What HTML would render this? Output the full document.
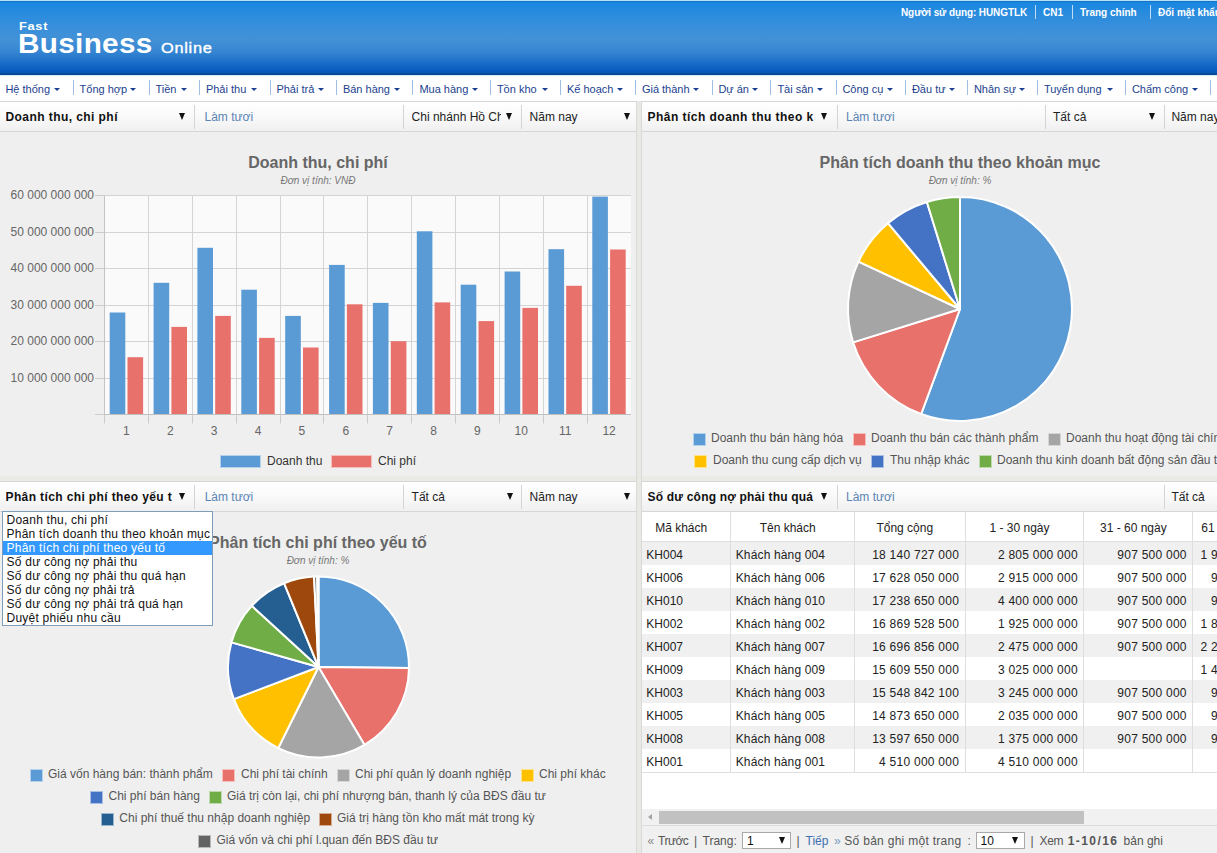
<!DOCTYPE html><html><head><meta charset="utf-8"><style>
*{margin:0;padding:0;box-sizing:border-box}
html,body{width:1217px;height:853px;overflow:hidden;background:#efefef;font-family:"Liberation Sans",sans-serif;font-size:12px;color:#000}
.a{position:absolute;white-space:nowrap}
#hdr{position:absolute;left:0;top:0;width:1217px;height:75px;
background:linear-gradient(to bottom,#b4e2fa 0px,#b4e2fa 1px,#1a70c4 1px,#1a70c4 2px,#1887e0 2px,#2a8cde 14px,#3d90d9 32px,#4291d6 40px,#3585d2 52px,#1c6fc8 62px,#0a5dc0 70px,#0856b4 73px,#0a4a94 73px,#0a4a94 75px)}
.logo{position:absolute;color:#fff;font-weight:bold;white-space:nowrap;line-height:1}
.usr{position:absolute;top:7px;color:#fff;font-weight:bold;font-size:10px;white-space:nowrap;line-height:12px}
.usep{position:absolute;top:5px;width:1px;height:14px;background:#c0dcf4}
#menu{position:absolute;left:0;top:75px;width:1217px;height:27px;background:linear-gradient(to bottom,#cdeafa 0,#cdeafa 1px,#fff 1px);border-bottom:1px solid #d6d6d6}
.mi{position:absolute;top:8px;color:#1b3f8f;font-size:11px;white-space:nowrap;line-height:13px}
.ma{position:absolute;top:13px;width:0;height:0;border-left:3px solid transparent;border-right:3px solid transparent;border-top:3px solid #1b3f8f}
.msep{position:absolute;top:5px;width:1px;height:15px;background:#9fc0e2}
.ph{position:absolute;height:30px;background:linear-gradient(to bottom,#ffffff 0,#fafafa 45%,#f0f0f0 100%);border-bottom:1px solid #d6d6d6;overflow:hidden}
.pt{position:absolute;top:8px;font-weight:bold;font-size:12px;white-space:nowrap;color:#111;line-height:14px}
.lt{position:absolute;top:8px;color:#5a84b4;font-size:12px;white-space:nowrap;line-height:14px}
.st{position:absolute;top:8px;color:#222;font-size:12px;white-space:nowrap;line-height:14px}
.arr{position:absolute;top:11px;width:0;height:0;border-left:3px solid transparent;border-right:3px solid transparent;border-top:7px solid #111}
.hsep{position:absolute;top:3px;width:1px;height:24px;background:#d4d4d4}
.ctitle{position:absolute;font-weight:bold;font-size:16px;color:#666;white-space:nowrap;line-height:18px;text-align:center}
.csub{position:absolute;font-style:italic;font-size:10px;color:#777;white-space:nowrap;line-height:12px;text-align:center}
.lg{position:absolute;font-size:12px;color:#555;white-space:nowrap;line-height:14px}
.lb{position:absolute;width:13px;height:13px;border:1px solid rgba(255,255,255,0.55);margin:-0.5px 0 0 -0.5px}
</style></head><body>
<div id="hdr">
<div class="logo" style="left:18.5px;top:20.5px;font-size:11.5px;letter-spacing:0.6px;transform:scaleX(1.12);transform-origin:0 0">Fast</div>
<div class="logo" style="left:17.5px;top:30px;font-size:27.5px;letter-spacing:0.3px;transform:scaleX(1.08);transform-origin:0 0">Business</div>
<div class="logo" style="left:160.5px;top:40.5px;font-size:14px;font-weight:normal;letter-spacing:0.6px;-webkit-text-stroke:0.35px #fff;transform:scaleX(1.17);transform-origin:0 0">Online</div>
<div class="usr" style="left:901px;letter-spacing:-0.1px">Người sử dụng: HUNGTLK</div>
<div class="usep" style="left:1035px"></div>
<div class="usr" style="left:1043px">CN1</div>
<div class="usep" style="left:1072px"></div>
<div class="usr" style="left:1080px">Trang chính</div>
<div class="usep" style="left:1150px"></div>
<div class="usr" style="left:1158px">Đổi mật khẩu</div>
</div>
<div id="menu">
<div class="mi" style="left:5.4px">Hệ thống</div>
<div class="ma" style="left:54.4px"></div>
<div class="mi" style="left:79.6px">Tổng hợp</div>
<div class="ma" style="left:130.3px"></div>
<div class="mi" style="left:155.5px">Tiền</div>
<div class="ma" style="left:180.7px"></div>
<div class="mi" style="left:205.9px">Phải thu</div>
<div class="ma" style="left:251.2px"></div>
<div class="mi" style="left:276.4px">Phải trả</div>
<div class="ma" style="left:317.7px"></div>
<div class="mi" style="left:342.9px">Bán hàng</div>
<div class="ma" style="left:394.2px"></div>
<div class="mi" style="left:419.4px">Mua hàng</div>
<div class="ma" style="left:471.7px"></div>
<div class="mi" style="left:496.9px">Tồn kho</div>
<div class="ma" style="left:541.7px"></div>
<div class="mi" style="left:566.9px">Kế hoạch</div>
<div class="ma" style="left:616.7px"></div>
<div class="mi" style="left:641.9px">Giá thành</div>
<div class="ma" style="left:693.2px"></div>
<div class="mi" style="left:718.4px">Dự án</div>
<div class="ma" style="left:752.2px"></div>
<div class="mi" style="left:777.4px">Tài sản</div>
<div class="ma" style="left:817.2px"></div>
<div class="mi" style="left:842.4px">Công cụ</div>
<div class="ma" style="left:886.7px"></div>
<div class="mi" style="left:911.9px">Đầu tư</div>
<div class="ma" style="left:948.7px"></div>
<div class="mi" style="left:973.9px">Nhân sự</div>
<div class="ma" style="left:1018.7px"></div>
<div class="mi" style="left:1043.9px">Tuyển dụng</div>
<div class="ma" style="left:1106.7px"></div>
<div class="mi" style="left:1131.9px">Chấm công</div>
<div class="ma" style="left:1191.7px"></div>
<div class="msep" style="left:73px"></div>
<div class="msep" style="left:149px"></div>
<div class="msep" style="left:199px"></div>
<div class="msep" style="left:270px"></div>
<div class="msep" style="left:336px"></div>
<div class="msep" style="left:412px"></div>
<div class="msep" style="left:490px"></div>
<div class="msep" style="left:560px"></div>
<div class="msep" style="left:635px"></div>
<div class="msep" style="left:712px"></div>
<div class="msep" style="left:770px"></div>
<div class="msep" style="left:836px"></div>
<div class="msep" style="left:905px"></div>
<div class="msep" style="left:967px"></div>
<div class="msep" style="left:1037px"></div>
<div class="msep" style="left:1125px"></div>
<div class="msep" style="left:1210px"></div>
</div>
<div class="a" style="left:0;top:476px;width:636px;height:5px;background:#ebebe5"></div>
<div class="a" style="left:641px;top:476px;width:576px;height:5px;background:#ebebe5"></div>
<div class="ph" style="left:0px;top:102px;width:636px;">
<div class="pt" style="left:5.5px;width:170px;overflow:hidden;letter-spacing:0.43px">Doanh thu, chi phí</div>
<div class="arr" style="left:178.7px"></div>
<div class="hsep" style="left:194px"></div>
<div class="lt" style="left:204.5px">Làm tươi</div>
<div class="hsep" style="left:403px"></div>
<div class="st" style="left:411.6px;width:89px;overflow:hidden">Chi nhánh Hồ Chí Minh</div>
<div class="arr" style="left:506px"></div>
<div class="hsep" style="left:521px"></div>
<div class="st" style="left:529.6px">Năm nay</div>
<div class="arr" style="left:624px"></div>
</div>
<div class="ph" style="left:641px;top:102px;width:576px;">
<div class="pt" style="left:6.5px;width:168px;overflow:hidden;letter-spacing:0.47px">Phân tích doanh thu theo k</div>
<div class="arr" style="left:180px"></div>
<div class="hsep" style="left:196px"></div>
<div class="lt" style="left:205px">Làm tươi</div>
<div class="hsep" style="left:404px"></div>
<div class="st" style="left:412px">Tất cả</div>
<div class="arr" style="left:507.7px"></div>
<div class="hsep" style="left:522.5px"></div>
<div class="st" style="left:530.4px">Năm nay</div>
</div>
<div class="ph" style="left:0px;top:481px;width:636px;height:31px;border-top:1px solid #d6d6d6;">
<div class="pt" style="left:5.5px;width:168px;overflow:hidden;letter-spacing:0.38px">Phân tích chi phí theo yếu t</div>
<div class="arr" style="left:178.7px"></div>
<div class="hsep" style="left:194px"></div>
<div class="lt" style="left:204.7px">Làm tươi</div>
<div class="hsep" style="left:403px"></div>
<div class="st" style="left:411.6px">Tất cả</div>
<div class="arr" style="left:506.5px"></div>
<div class="hsep" style="left:521px"></div>
<div class="st" style="left:529.6px">Năm nay</div>
<div class="arr" style="left:624px"></div>
</div>
<div class="ph" style="left:641px;top:481px;width:576px;height:31px;border-top:1px solid #d6d6d6;">
<div class="pt" style="left:6.5px;width:168px;overflow:hidden;letter-spacing:0.2px">Số dư công nợ phải thu quá</div>
<div class="arr" style="left:180px"></div>
<div class="hsep" style="left:196px"></div>
<div class="lt" style="left:205px">Làm tươi</div>
<div class="hsep" style="left:522.5px"></div>
<div class="st" style="left:530.4px">Tất cả</div>
</div>
<svg class="a" style="left:0;top:0" width="1217" height="853">
<rect x="104.5" y="195.5" width="526.5" height="219.0" fill="#fafafa"/>
<line x1="104.5" y1="195.5" x2="631.0" y2="195.5" stroke="#d4d4d4" stroke-width="1"/>
<line x1="104.5" y1="232.5" x2="631.0" y2="232.5" stroke="#d4d4d4" stroke-width="1"/>
<line x1="104.5" y1="268.5" x2="631.0" y2="268.5" stroke="#d4d4d4" stroke-width="1"/>
<line x1="104.5" y1="305.5" x2="631.0" y2="305.5" stroke="#d4d4d4" stroke-width="1"/>
<line x1="104.5" y1="341.5" x2="631.0" y2="341.5" stroke="#d4d4d4" stroke-width="1"/>
<line x1="104.5" y1="378.5" x2="631.0" y2="378.5" stroke="#d4d4d4" stroke-width="1"/>
<line x1="104.5" y1="414.5" x2="631.0" y2="414.5" stroke="#d4d4d4" stroke-width="1"/>
<line x1="104.5" y1="195.5" x2="104.5" y2="414.5" stroke="#d4d4d4" stroke-width="1"/>
<line x1="148.5" y1="195.5" x2="148.5" y2="414.5" stroke="#d4d4d4" stroke-width="1"/>
<line x1="192.5" y1="195.5" x2="192.5" y2="414.5" stroke="#d4d4d4" stroke-width="1"/>
<line x1="236.5" y1="195.5" x2="236.5" y2="414.5" stroke="#d4d4d4" stroke-width="1"/>
<line x1="280.5" y1="195.5" x2="280.5" y2="414.5" stroke="#d4d4d4" stroke-width="1"/>
<line x1="323.5" y1="195.5" x2="323.5" y2="414.5" stroke="#d4d4d4" stroke-width="1"/>
<line x1="367.5" y1="195.5" x2="367.5" y2="414.5" stroke="#d4d4d4" stroke-width="1"/>
<line x1="411.5" y1="195.5" x2="411.5" y2="414.5" stroke="#d4d4d4" stroke-width="1"/>
<line x1="455.5" y1="195.5" x2="455.5" y2="414.5" stroke="#d4d4d4" stroke-width="1"/>
<line x1="499.5" y1="195.5" x2="499.5" y2="414.5" stroke="#d4d4d4" stroke-width="1"/>
<line x1="543.5" y1="195.5" x2="543.5" y2="414.5" stroke="#d4d4d4" stroke-width="1"/>
<line x1="587.5" y1="195.5" x2="587.5" y2="414.5" stroke="#d4d4d4" stroke-width="1"/>
<rect x="109.7" y="312.5" width="15.6" height="102.0" fill="#5b9bd5"/>
<rect x="127.5" y="357.2" width="15.6" height="57.3" fill="#e8716b"/>
<rect x="153.6" y="282.8" width="15.6" height="131.7" fill="#5b9bd5"/>
<rect x="171.4" y="326.9" width="15.6" height="87.6" fill="#e8716b"/>
<rect x="197.4" y="247.8" width="15.6" height="166.7" fill="#5b9bd5"/>
<rect x="215.2" y="315.9" width="15.6" height="98.6" fill="#e8716b"/>
<rect x="241.3" y="289.7" width="15.6" height="124.8" fill="#5b9bd5"/>
<rect x="259.1" y="337.9" width="15.6" height="76.6" fill="#e8716b"/>
<rect x="285.2" y="315.9" width="15.6" height="98.6" fill="#5b9bd5"/>
<rect x="303.0" y="347.5" width="15.6" height="67.0" fill="#e8716b"/>
<rect x="329.1" y="264.9" width="15.6" height="149.6" fill="#5b9bd5"/>
<rect x="346.9" y="304.3" width="15.6" height="110.2" fill="#e8716b"/>
<rect x="372.9" y="302.9" width="15.6" height="111.6" fill="#5b9bd5"/>
<rect x="390.8" y="341.2" width="15.6" height="73.3" fill="#e8716b"/>
<rect x="416.8" y="231.3" width="15.6" height="183.2" fill="#5b9bd5"/>
<rect x="434.6" y="302.4" width="15.6" height="112.1" fill="#e8716b"/>
<rect x="460.7" y="284.7" width="15.6" height="129.8" fill="#5b9bd5"/>
<rect x="478.5" y="321.1" width="15.6" height="93.4" fill="#e8716b"/>
<rect x="504.6" y="271.5" width="15.6" height="143.0" fill="#5b9bd5"/>
<rect x="522.4" y="307.9" width="15.6" height="106.6" fill="#e8716b"/>
<rect x="548.5" y="249.2" width="15.6" height="165.3" fill="#5b9bd5"/>
<rect x="566.2" y="285.8" width="15.6" height="128.7" fill="#e8716b"/>
<rect x="592.3" y="196.6" width="15.6" height="217.9" fill="#5b9bd5"/>
<rect x="610.1" y="249.5" width="15.6" height="165.0" fill="#e8716b"/>
<line x1="95" y1="414.5" x2="631.0" y2="414.5" stroke="#bfbfbf" stroke-width="1"/>
<line x1="95" y1="195.5" x2="104.5" y2="195.5" stroke="#cccccc" stroke-width="1"/>
<line x1="95" y1="232.5" x2="104.5" y2="232.5" stroke="#cccccc" stroke-width="1"/>
<line x1="95" y1="268.5" x2="104.5" y2="268.5" stroke="#cccccc" stroke-width="1"/>
<line x1="95" y1="305.5" x2="104.5" y2="305.5" stroke="#cccccc" stroke-width="1"/>
<line x1="95" y1="341.5" x2="104.5" y2="341.5" stroke="#cccccc" stroke-width="1"/>
<line x1="95" y1="378.5" x2="104.5" y2="378.5" stroke="#cccccc" stroke-width="1"/>
<line x1="95" y1="414.5" x2="104.5" y2="414.5" stroke="#cccccc" stroke-width="1"/>
<line x1="104.5" y1="195.5" x2="104.5" y2="414.5" stroke="#c4c4c4" stroke-width="1"/>
<line x1="104.5" y1="414.5" x2="104.5" y2="423.5" stroke="#cccccc" stroke-width="1"/>
<line x1="148.5" y1="414.5" x2="148.5" y2="423.5" stroke="#cccccc" stroke-width="1"/>
<line x1="192.5" y1="414.5" x2="192.5" y2="423.5" stroke="#cccccc" stroke-width="1"/>
<line x1="236.5" y1="414.5" x2="236.5" y2="423.5" stroke="#cccccc" stroke-width="1"/>
<line x1="280.5" y1="414.5" x2="280.5" y2="423.5" stroke="#cccccc" stroke-width="1"/>
<line x1="323.5" y1="414.5" x2="323.5" y2="423.5" stroke="#cccccc" stroke-width="1"/>
<line x1="367.5" y1="414.5" x2="367.5" y2="423.5" stroke="#cccccc" stroke-width="1"/>
<line x1="411.5" y1="414.5" x2="411.5" y2="423.5" stroke="#cccccc" stroke-width="1"/>
<line x1="455.5" y1="414.5" x2="455.5" y2="423.5" stroke="#cccccc" stroke-width="1"/>
<line x1="499.5" y1="414.5" x2="499.5" y2="423.5" stroke="#cccccc" stroke-width="1"/>
<line x1="543.5" y1="414.5" x2="543.5" y2="423.5" stroke="#cccccc" stroke-width="1"/>
<line x1="587.5" y1="414.5" x2="587.5" y2="423.5" stroke="#cccccc" stroke-width="1"/>
<text x="94" y="199.1" text-anchor="end" font-family="Liberation Sans" font-size="12" fill="#666">60 000 000 000</text>
<text x="94" y="235.6" text-anchor="end" font-family="Liberation Sans" font-size="12" fill="#666">50 000 000 000</text>
<text x="94" y="272.1" text-anchor="end" font-family="Liberation Sans" font-size="12" fill="#666">40 000 000 000</text>
<text x="94" y="308.6" text-anchor="end" font-family="Liberation Sans" font-size="12" fill="#666">30 000 000 000</text>
<text x="94" y="345.1" text-anchor="end" font-family="Liberation Sans" font-size="12" fill="#666">20 000 000 000</text>
<text x="94" y="381.6" text-anchor="end" font-family="Liberation Sans" font-size="12" fill="#666">10 000 000 000</text>
<text x="126.4" y="435" text-anchor="middle" font-family="Liberation Sans" font-size="12" fill="#666">1</text>
<text x="170.3" y="435" text-anchor="middle" font-family="Liberation Sans" font-size="12" fill="#666">2</text>
<text x="214.2" y="435" text-anchor="middle" font-family="Liberation Sans" font-size="12" fill="#666">3</text>
<text x="258.1" y="435" text-anchor="middle" font-family="Liberation Sans" font-size="12" fill="#666">4</text>
<text x="301.9" y="435" text-anchor="middle" font-family="Liberation Sans" font-size="12" fill="#666">5</text>
<text x="345.8" y="435" text-anchor="middle" font-family="Liberation Sans" font-size="12" fill="#666">6</text>
<text x="389.7" y="435" text-anchor="middle" font-family="Liberation Sans" font-size="12" fill="#666">7</text>
<text x="433.6" y="435" text-anchor="middle" font-family="Liberation Sans" font-size="12" fill="#666">8</text>
<text x="477.4" y="435" text-anchor="middle" font-family="Liberation Sans" font-size="12" fill="#666">9</text>
<text x="521.3" y="435" text-anchor="middle" font-family="Liberation Sans" font-size="12" fill="#666">10</text>
<text x="565.2" y="435" text-anchor="middle" font-family="Liberation Sans" font-size="12" fill="#666">11</text>
<text x="609.1" y="435" text-anchor="middle" font-family="Liberation Sans" font-size="12" fill="#666">12</text>
</svg>
<div class="ctitle" style="left:218px;top:154px;width:200px">Doanh thu, chi phí</div>
<div class="csub" style="left:218px;top:175px;width:200px">Đơn vị tính: VNĐ</div>
<div class="lb" style="left:220.5px;top:455px;width:41px;height:13px;background:#5b9bd5"></div>
<div class="lg" style="left:267px;top:454px;color:#333">Doanh thu</div>
<div class="lb" style="left:331.5px;top:455px;width:41px;height:13px;background:#e8716b"></div>
<div class="lg" style="left:378px;top:454px;color:#333">Chi phí</div>
<svg class="a" style="left:0;top:0" width="1217" height="853">
<path d="M960,309 L960.00,197.00 A112,112 0 1 1 921.14,414.04 Z" fill="#5b9bd5" stroke="#fff" stroke-width="2" stroke-linejoin="round"/>
<path d="M960,309 L921.14,414.04 A112,112 0 0 1 853.10,342.40 Z" fill="#e8716b" stroke="#fff" stroke-width="2" stroke-linejoin="round"/>
<path d="M960,309 L853.10,342.40 A112,112 0 0 1 858.49,261.67 Z" fill="#a5a5a5" stroke="#fff" stroke-width="2" stroke-linejoin="round"/>
<path d="M960,309 L858.49,261.67 A112,112 0 0 1 888.01,223.20 Z" fill="#ffc000" stroke="#fff" stroke-width="2" stroke-linejoin="round"/>
<path d="M960,309 L888.01,223.20 A112,112 0 0 1 926.88,202.01 Z" fill="#4472c4" stroke="#fff" stroke-width="2" stroke-linejoin="round"/>
<path d="M960,309 L926.88,202.01 A112,112 0 0 1 960.00,197.00 Z" fill="#70ad47" stroke="#fff" stroke-width="2" stroke-linejoin="round"/>
</svg>
<div class="ctitle" style="left:760px;top:154px;width:400px">Phân tích doanh thu theo khoản mục</div>
<div class="csub" style="left:760px;top:175px;width:400px">Đơn vị tính: %</div>
<div class="lb" style="left:693px;top:433px;background:#5b9bd5"></div>
<div class="lg" style="left:711px;top:431.2px">Doanh thu bán hàng hóa</div>
<div class="lb" style="left:853px;top:433px;background:#e8716b"></div>
<div class="lg" style="left:871px;top:431.2px">Doanh thu bán các thành phẩm</div>
<div class="lb" style="left:1048px;top:433px;background:#a5a5a5"></div>
<div class="lg" style="left:1066px;top:431.2px">Doanh thu hoạt động tài chính</div>
<div class="lb" style="left:694.5px;top:455px;background:#ffc000"></div>
<div class="lg" style="left:713px;top:453.2px">Doanh thu cung cấp dịch vụ</div>
<div class="lb" style="left:871.5px;top:455px;background:#4472c4"></div>
<div class="lg" style="left:890px;top:453.2px">Thu nhập khác</div>
<div class="lb" style="left:979px;top:455px;background:#70ad47"></div>
<div class="lg" style="left:997px;top:453.2px">Doanh thu kinh doanh bất động sản đầu tư</div>
<svg class="a" style="left:0;top:0" width="1217" height="853">
<path d="M318.5,667 L318.50,576.50 A90.5,90.5 0 0 1 408.99,668.11 Z" fill="#5b9bd5" stroke="#fff" stroke-width="2" stroke-linejoin="round"/>
<path d="M318.5,667 L408.99,668.11 A90.5,90.5 0 0 1 364.57,744.90 Z" fill="#e8716b" stroke="#fff" stroke-width="2" stroke-linejoin="round"/>
<path d="M318.5,667 L364.57,744.90 A90.5,90.5 0 0 1 278.26,748.06 Z" fill="#a5a5a5" stroke="#fff" stroke-width="2" stroke-linejoin="round"/>
<path d="M318.5,667 L278.26,748.06 A90.5,90.5 0 0 1 233.90,699.14 Z" fill="#ffc000" stroke="#fff" stroke-width="2" stroke-linejoin="round"/>
<path d="M318.5,667 L233.90,699.14 A90.5,90.5 0 0 1 231.42,642.36 Z" fill="#4472c4" stroke="#fff" stroke-width="2" stroke-linejoin="round"/>
<path d="M318.5,667 L231.42,642.36 A90.5,90.5 0 0 1 251.78,605.86 Z" fill="#70ad47" stroke="#fff" stroke-width="2" stroke-linejoin="round"/>
<path d="M318.5,667 L251.78,605.86 A90.5,90.5 0 0 1 284.16,583.27 Z" fill="#255e91" stroke="#fff" stroke-width="2" stroke-linejoin="round"/>
<path d="M318.5,667 L284.16,583.27 A90.5,90.5 0 0 1 314.08,576.61 Z" fill="#9e480e" stroke="#fff" stroke-width="2" stroke-linejoin="round"/>
<path d="M318.5,667 L314.08,576.61 A90.5,90.5 0 0 1 317.24,576.51 Z" fill="#636363" stroke="#fff" stroke-width="2" stroke-linejoin="round"/>
<path d="M318.5,667 L317.24,576.51 A90.5,90.5 0 0 1 318.50,576.50 Z" fill="#997300" stroke="#fff" stroke-width="2" stroke-linejoin="round"/>
</svg>
<div class="ctitle" style="left:118px;top:534px;width:400px">Phân tích chi phí theo yếu tố</div>
<div class="csub" style="left:118px;top:555px;width:400px">Đơn vị tính: %</div>
<div class="lb" style="left:30px;top:769px;background:#5b9bd5"></div>
<div class="lg" style="left:48px;top:767.2px">Giá vốn hàng bán: thành phẩm</div>
<div class="lb" style="left:222.5px;top:769px;background:#e8716b"></div>
<div class="lg" style="left:241px;top:767.2px">Chi phí tài chính</div>
<div class="lb" style="left:337px;top:769px;background:#a5a5a5"></div>
<div class="lg" style="left:355px;top:767.2px">Chi phí quản lý doanh nghiệp</div>
<div class="lb" style="left:521px;top:769px;background:#ffc000"></div>
<div class="lg" style="left:539px;top:767.2px">Chi phí khác</div>
<div class="lb" style="left:90px;top:791px;background:#4472c4"></div>
<div class="lg" style="left:108.5px;top:789.2px">Chi phí bán hàng</div>
<div class="lb" style="left:209px;top:791px;background:#70ad47"></div>
<div class="lg" style="left:227px;top:789.2px">Giá trị còn lại, chi phí nhượng bán, thanh lý của BĐS đầu tư</div>
<div class="lb" style="left:101px;top:813px;background:#255e91"></div>
<div class="lg" style="left:119.3px;top:811.2px">Chi phí thuế thu nhập doanh nghiệp</div>
<div class="lb" style="left:319px;top:813px;background:#9e480e"></div>
<div class="lg" style="left:337px;top:811.2px">Giá trị hàng tồn kho mất mát trong kỳ</div>
<div class="lb" style="left:198px;top:835px;background:#636363"></div>
<div class="lg" style="left:216.5px;top:833.2px">Giá vốn và chi phí l.quan đến BĐS đầu tư</div>
<div class="a" style="left:641px;top:512px;width:576px;height:297px;background:#fff;overflow:hidden">
<div class="a" style="left:0;top:0;width:700px;height:30px;background:#fff;border-bottom:1px solid #dedede"></div>
<div class="a" style="left:0;top:30px;width:700px;height:23px;background:#f0f0f0"></div>
<div class="a" style="left:0;top:53px;width:700px;height:23px;background:#fff"></div>
<div class="a" style="left:0;top:76px;width:700px;height:23px;background:#f0f0f0"></div>
<div class="a" style="left:0;top:99px;width:700px;height:23px;background:#fff"></div>
<div class="a" style="left:0;top:122px;width:700px;height:23px;background:#f0f0f0"></div>
<div class="a" style="left:0;top:145px;width:700px;height:23px;background:#fff"></div>
<div class="a" style="left:0;top:168px;width:700px;height:23px;background:#f0f0f0"></div>
<div class="a" style="left:0;top:191px;width:700px;height:23px;background:#fff"></div>
<div class="a" style="left:0;top:214px;width:700px;height:23px;background:#f0f0f0"></div>
<div class="a" style="left:0;top:237px;width:700px;height:23px;background:#fff"></div>
<div class="a" style="left:0;top:260px;width:700px;height:1px;background:#dedede"></div>
<div class="a" style="left:89.4px;top:0;width:1px;height:261px;background:#dedede"></div>
<div class="a" style="left:213.0px;top:0;width:1px;height:261px;background:#dedede"></div>
<div class="a" style="left:323.6px;top:0;width:1px;height:261px;background:#dedede"></div>
<div class="a" style="left:442.4px;top:0;width:1px;height:261px;background:#dedede"></div>
<div class="a" style="left:551.3px;top:0;width:1px;height:261px;background:#dedede"></div>
<div class="a" style="left:645.0px;top:0;width:1px;height:261px;background:#dedede"></div>
<div class="a" style="left:0.0px;top:8.5px;width:80.4px;text-align:center;color:#222;line-height:14px">Mã khách</div>
<div class="a" style="left:89.4px;top:8.5px;width:114.6px;text-align:center;color:#222;line-height:14px">Tên khách</div>
<div class="a" style="left:213.0px;top:8.5px;width:101.6px;text-align:center;color:#222;line-height:14px">Tổng cộng</div>
<div class="a" style="left:323.6px;top:8.5px;width:109.8px;text-align:center;color:#222;line-height:14px">1 - 30 ngày</div>
<div class="a" style="left:442.4px;top:8.5px;width:99.9px;text-align:center;color:#222;line-height:14px">31 - 60 ngày</div>
<div class="a" style="left:551.3px;top:8.5px;width:84.7px;text-align:center;color:#222;line-height:14px">61 - 90 ngày</div>
<div class="a" style="left:5.3px;top:35.5px;color:#222;line-height:14px;letter-spacing:0px">KH004</div>
<div class="a" style="left:94.7px;top:35.5px;color:#222;line-height:14px;letter-spacing:0.15px">Khách hàng 004</div>
<div class="a" style="left:213.0px;top:35.5px;width:105.1px;text-align:right;color:#222;line-height:14px;letter-spacing:0.25px">18 140 727 000</div>
<div class="a" style="left:323.6px;top:35.5px;width:113.3px;text-align:right;color:#222;line-height:14px;letter-spacing:0.25px">2 805 000 000</div>
<div class="a" style="left:442.4px;top:35.5px;width:103.4px;text-align:right;color:#222;line-height:14px;letter-spacing:0.25px">907 500 000</div>
<div class="a" style="left:551.3px;top:35.5px;width:88.2px;text-align:right;color:#222;line-height:14px;letter-spacing:0.25px">1 907 500 000</div>
<div class="a" style="left:5.3px;top:58.5px;color:#222;line-height:14px;letter-spacing:0px">KH006</div>
<div class="a" style="left:94.7px;top:58.5px;color:#222;line-height:14px;letter-spacing:0.15px">Khách hàng 006</div>
<div class="a" style="left:213.0px;top:58.5px;width:105.1px;text-align:right;color:#222;line-height:14px;letter-spacing:0.25px">17 628 050 000</div>
<div class="a" style="left:323.6px;top:58.5px;width:113.3px;text-align:right;color:#222;line-height:14px;letter-spacing:0.25px">2 915 000 000</div>
<div class="a" style="left:442.4px;top:58.5px;width:103.4px;text-align:right;color:#222;line-height:14px;letter-spacing:0.25px">907 500 000</div>
<div class="a" style="left:551.3px;top:58.5px;width:88.2px;text-align:right;color:#222;line-height:14px;letter-spacing:0.25px">907 500 000</div>
<div class="a" style="left:5.3px;top:81.5px;color:#222;line-height:14px;letter-spacing:0px">KH010</div>
<div class="a" style="left:94.7px;top:81.5px;color:#222;line-height:14px;letter-spacing:0.15px">Khách hàng 010</div>
<div class="a" style="left:213.0px;top:81.5px;width:105.1px;text-align:right;color:#222;line-height:14px;letter-spacing:0.25px">17 238 650 000</div>
<div class="a" style="left:323.6px;top:81.5px;width:113.3px;text-align:right;color:#222;line-height:14px;letter-spacing:0.25px">4 400 000 000</div>
<div class="a" style="left:442.4px;top:81.5px;width:103.4px;text-align:right;color:#222;line-height:14px;letter-spacing:0.25px">907 500 000</div>
<div class="a" style="left:551.3px;top:81.5px;width:88.2px;text-align:right;color:#222;line-height:14px;letter-spacing:0.25px">907 500 000</div>
<div class="a" style="left:5.3px;top:104.5px;color:#222;line-height:14px;letter-spacing:0px">KH002</div>
<div class="a" style="left:94.7px;top:104.5px;color:#222;line-height:14px;letter-spacing:0.15px">Khách hàng 002</div>
<div class="a" style="left:213.0px;top:104.5px;width:105.1px;text-align:right;color:#222;line-height:14px;letter-spacing:0.25px">16 869 528 500</div>
<div class="a" style="left:323.6px;top:104.5px;width:113.3px;text-align:right;color:#222;line-height:14px;letter-spacing:0.25px">1 925 000 000</div>
<div class="a" style="left:442.4px;top:104.5px;width:103.4px;text-align:right;color:#222;line-height:14px;letter-spacing:0.25px">907 500 000</div>
<div class="a" style="left:551.3px;top:104.5px;width:88.2px;text-align:right;color:#222;line-height:14px;letter-spacing:0.25px">1 815 000 000</div>
<div class="a" style="left:5.3px;top:127.5px;color:#222;line-height:14px;letter-spacing:0px">KH007</div>
<div class="a" style="left:94.7px;top:127.5px;color:#222;line-height:14px;letter-spacing:0.15px">Khách hàng 007</div>
<div class="a" style="left:213.0px;top:127.5px;width:105.1px;text-align:right;color:#222;line-height:14px;letter-spacing:0.25px">16 696 856 000</div>
<div class="a" style="left:323.6px;top:127.5px;width:113.3px;text-align:right;color:#222;line-height:14px;letter-spacing:0.25px">2 475 000 000</div>
<div class="a" style="left:442.4px;top:127.5px;width:103.4px;text-align:right;color:#222;line-height:14px;letter-spacing:0.25px">907 500 000</div>
<div class="a" style="left:551.3px;top:127.5px;width:88.2px;text-align:right;color:#222;line-height:14px;letter-spacing:0.25px">2 245 000 000</div>
<div class="a" style="left:5.3px;top:150.5px;color:#222;line-height:14px;letter-spacing:0px">KH009</div>
<div class="a" style="left:94.7px;top:150.5px;color:#222;line-height:14px;letter-spacing:0.15px">Khách hàng 009</div>
<div class="a" style="left:213.0px;top:150.5px;width:105.1px;text-align:right;color:#222;line-height:14px;letter-spacing:0.25px">15 609 550 000</div>
<div class="a" style="left:323.6px;top:150.5px;width:113.3px;text-align:right;color:#222;line-height:14px;letter-spacing:0.25px">3 025 000 000</div>
<div class="a" style="left:551.3px;top:150.5px;width:88.2px;text-align:right;color:#222;line-height:14px;letter-spacing:0.25px">1 452 000 000</div>
<div class="a" style="left:5.3px;top:173.5px;color:#222;line-height:14px;letter-spacing:0px">KH003</div>
<div class="a" style="left:94.7px;top:173.5px;color:#222;line-height:14px;letter-spacing:0.15px">Khách hàng 003</div>
<div class="a" style="left:213.0px;top:173.5px;width:105.1px;text-align:right;color:#222;line-height:14px;letter-spacing:0.25px">15 548 842 100</div>
<div class="a" style="left:323.6px;top:173.5px;width:113.3px;text-align:right;color:#222;line-height:14px;letter-spacing:0.25px">3 245 000 000</div>
<div class="a" style="left:442.4px;top:173.5px;width:103.4px;text-align:right;color:#222;line-height:14px;letter-spacing:0.25px">907 500 000</div>
<div class="a" style="left:551.3px;top:173.5px;width:88.2px;text-align:right;color:#222;line-height:14px;letter-spacing:0.25px">907 500 000</div>
<div class="a" style="left:5.3px;top:196.5px;color:#222;line-height:14px;letter-spacing:0px">KH005</div>
<div class="a" style="left:94.7px;top:196.5px;color:#222;line-height:14px;letter-spacing:0.15px">Khách hàng 005</div>
<div class="a" style="left:213.0px;top:196.5px;width:105.1px;text-align:right;color:#222;line-height:14px;letter-spacing:0.25px">14 873 650 000</div>
<div class="a" style="left:323.6px;top:196.5px;width:113.3px;text-align:right;color:#222;line-height:14px;letter-spacing:0.25px">2 035 000 000</div>
<div class="a" style="left:442.4px;top:196.5px;width:103.4px;text-align:right;color:#222;line-height:14px;letter-spacing:0.25px">907 500 000</div>
<div class="a" style="left:551.3px;top:196.5px;width:88.2px;text-align:right;color:#222;line-height:14px;letter-spacing:0.25px">907 500 000</div>
<div class="a" style="left:5.3px;top:219.5px;color:#222;line-height:14px;letter-spacing:0px">KH008</div>
<div class="a" style="left:94.7px;top:219.5px;color:#222;line-height:14px;letter-spacing:0.15px">Khách hàng 008</div>
<div class="a" style="left:213.0px;top:219.5px;width:105.1px;text-align:right;color:#222;line-height:14px;letter-spacing:0.25px">13 597 650 000</div>
<div class="a" style="left:323.6px;top:219.5px;width:113.3px;text-align:right;color:#222;line-height:14px;letter-spacing:0.25px">1 375 000 000</div>
<div class="a" style="left:442.4px;top:219.5px;width:103.4px;text-align:right;color:#222;line-height:14px;letter-spacing:0.25px">907 500 000</div>
<div class="a" style="left:551.3px;top:219.5px;width:88.2px;text-align:right;color:#222;line-height:14px;letter-spacing:0.25px">907 500 000</div>
<div class="a" style="left:5.3px;top:242.5px;color:#222;line-height:14px;letter-spacing:0px">KH001</div>
<div class="a" style="left:94.7px;top:242.5px;color:#222;line-height:14px;letter-spacing:0.15px">Khách hàng 001</div>
<div class="a" style="left:213.0px;top:242.5px;width:105.1px;text-align:right;color:#222;line-height:14px;letter-spacing:0.25px">4 510 000 000</div>
<div class="a" style="left:323.6px;top:242.5px;width:113.3px;text-align:right;color:#222;line-height:14px;letter-spacing:0.25px">4 510 000 000</div>
</div>
<div class="a" style="left:641px;top:809px;width:576px;height:16px;background:#f1f1f1"></div>
<div class="a" style="left:659px;top:811px;width:425px;height:13px;background:#c1c1c1"></div>
<div class="a" style="left:647.5px;top:814px;width:0;height:0;border-top:3.5px solid transparent;border-bottom:3.5px solid transparent;border-right:4px solid #a3a3a3"></div>
<div class="a" style="left:641px;top:825px;width:576px;height:28px;background:#f0f0f0;border-top:1px solid #dcdcdc"></div>
<div class="a" style="left:647.5px;color:#555;line-height:14px;top:834px;color:#888">«</div>
<div class="a" style="left:658px;color:#555;line-height:14px;top:834px;letter-spacing:-0.5px">Trước</div>
<div class="a" style="left:694px;color:#555;line-height:14px;top:834px">|</div>
<div class="a" style="left:702.5px;color:#555;line-height:14px;top:834px">Trang:</div>
<div class="a" style="left:741.5px;top:832px;width:49px;height:16.5px;background:#fff;border:1px solid #a9a9a9"></div>
<div class="a" style="left:747px;color:#555;line-height:14px;top:834px;color:#111">1</div>
<div class="a" style="left:778.5px;top:837px;width:0;height:0;border-left:3.5px solid transparent;border-right:3.5px solid transparent;border-top:7px solid #111"></div>
<div class="a" style="left:796.5px;color:#555;line-height:14px;top:834px">|</div>
<div class="a" style="left:805.5px;color:#555;line-height:14px;top:834px;color:#3d6fb0">Tiếp</div>
<div class="a" style="left:834px;color:#555;line-height:14px;top:834px;color:#7a9cc4">»</div>
<div class="a" style="left:844.3px;color:#555;line-height:14px;top:834px;letter-spacing:0.29px">Số bản ghi một trang</div>
<div class="a" style="left:967.5px;color:#555;line-height:14px;top:834px">:</div>
<div class="a" style="left:975.5px;top:832px;width:49px;height:16.5px;background:#fff;border:1px solid #a9a9a9"></div>
<div class="a" style="left:980.5px;color:#555;line-height:14px;top:834px;color:#111">10</div>
<div class="a" style="left:1012px;top:837px;width:0;height:0;border-left:3.5px solid transparent;border-right:3.5px solid transparent;border-top:7px solid #111"></div>
<div class="a" style="left:1030.5px;color:#555;line-height:14px;top:834px">|</div>
<div class="a" style="left:1039.5px;color:#555;line-height:14px;top:834px;letter-spacing:-0.3px">Xem</div>
<div class="a" style="left:1067.8px;color:#555;line-height:14px;top:834px;font-weight:bold;letter-spacing:1.4px">1-10/16</div>
<div class="a" style="left:1123.6px;color:#555;line-height:14px;top:834px">bản ghi</div>
<div class="a" style="left:636px;top:101px;width:6px;height:752px;background:#e9e9e3;border-left:1px solid #d9d9d9;border-right:1px solid #d9d9d9"></div>
<div class="a" style="left:2px;top:511px;width:211px;height:115px;background:#fff;border:1px solid #7f9db9;overflow:hidden">
<div class="a" style="left:0;top:0.5px;width:209px;height:14px;color:#111;padding-left:3.6px;line-height:14px;font-size:12px;letter-spacing:0.22px">Doanh thu, chi phí</div>
<div class="a" style="left:0;top:14.5px;width:209px;height:14px;color:#111;padding-left:3.6px;line-height:14px;font-size:12px;letter-spacing:0.22px">Phân tích doanh thu theo khoản mục</div>
<div class="a" style="left:0;top:28.5px;width:209px;height:14px;background:#3399ff;color:#fff;padding-left:3.6px;line-height:14px;font-size:12px;letter-spacing:0.22px">Phân tích chi phí theo yếu tố</div>
<div class="a" style="left:0;top:42.5px;width:209px;height:14px;color:#111;padding-left:3.6px;line-height:14px;font-size:12px;letter-spacing:0.22px">Số dư công nợ phải thu</div>
<div class="a" style="left:0;top:56.5px;width:209px;height:14px;color:#111;padding-left:3.6px;line-height:14px;font-size:12px;letter-spacing:0.22px">Số dư công nợ phải thu quá hạn</div>
<div class="a" style="left:0;top:70.5px;width:209px;height:14px;color:#111;padding-left:3.6px;line-height:14px;font-size:12px;letter-spacing:0.22px">Số dư công nợ phải trả</div>
<div class="a" style="left:0;top:84.5px;width:209px;height:14px;color:#111;padding-left:3.6px;line-height:14px;font-size:12px;letter-spacing:0.22px">Số dư công nợ phải trả quá hạn</div>
<div class="a" style="left:0;top:98.5px;width:209px;height:14px;color:#111;padding-left:3.6px;line-height:14px;font-size:12px;letter-spacing:0.22px">Duyệt phiếu nhu cầu</div>
</div>
<!--BODY-->
</body></html>
